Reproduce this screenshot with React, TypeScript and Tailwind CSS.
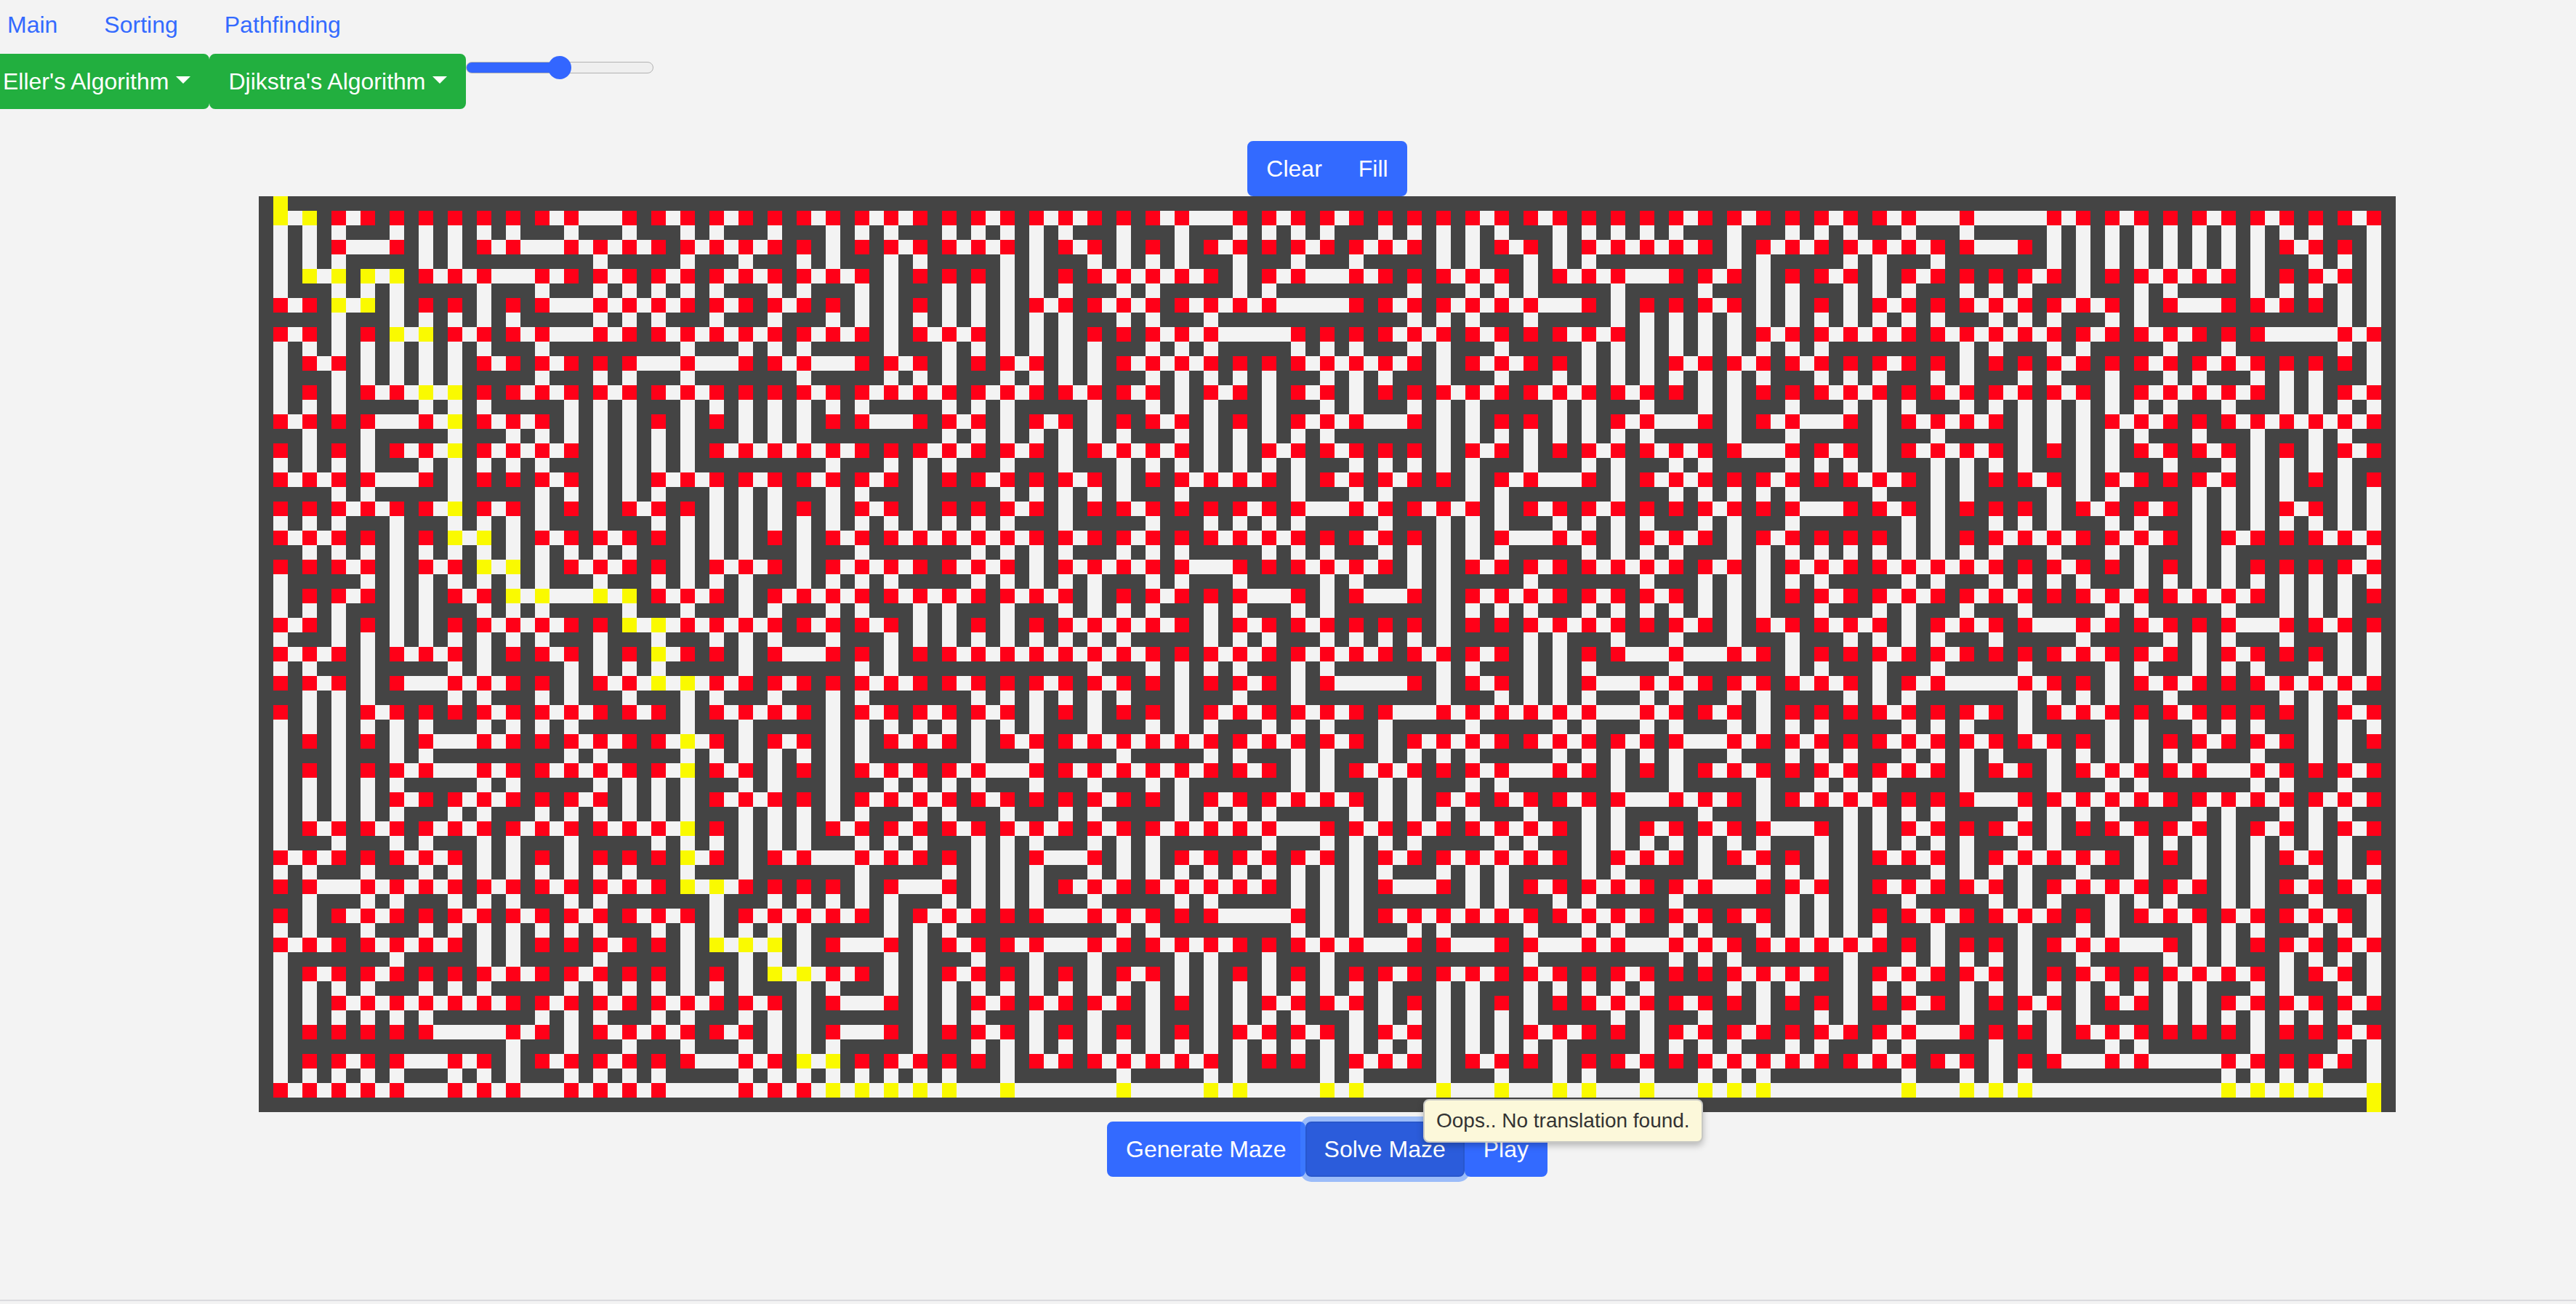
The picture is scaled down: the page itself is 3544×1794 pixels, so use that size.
import React from "react";

const COLS = 73;
const ROWS = 31;
const BLOCK = 15;

// Openings to the left of each cell. Every line is one row of cells, split into
// blocks of fifteen; each hex digit is the index of a cell inside its block.
const LEFT_OPENINGS = [
  "13abce|1467acd|12357ce|469bcde|012479c",
  "3489abcd|01279ad|3689d|123478abce|0a",
  "246789ace|1245e|0125678bc|012359c|1567b",
  "13abcde|13ce|02345679bcde|05be|023679",
  "1579abce|0124589|123459ac|0179abde|013569abc",
  "28ade|013457b|0126789cd|468b|2578",
  "4569ace|04678abd|036bce|029ad|025678c",
  "145689|679c|16789|234789cde|4589abc",
  "5689a|1234589be|0157c|134679cde|57c",
  "1245ae|0246ad|23479de|0347ab|147",
  "3468d|6b|04678abe|1589b|35a",
  "127ac|5789abd|03458de|0347|012458bc",
  "368bc|125679ade|023678ce|123589bcde|2c",
  "379abce|0345789bc|14589cde|139bce|034678",
  "189ade|01246de|0146e|01479ade|123589b",
  "1256ae|349abcde|034678ac|23456bd|2358",
  "25678cde|013679ce|4789c|1234689cde|01569abc",
  "48abd|12368a|34679abcde|01235be|236c",
  "678bce|0378bde|012457abce|024568bce|179",
  "5678abce|1679abde|012489cde|0569bc|0346789c",
  "578b|12678ae|3567bd|0234589ae|02345789bc",
  "24679acde|579bce|1234568acde|3578c|0469c",
  "1256|034567cd|2469bcde|236bc|0123a",
  "234568acd|0178de|12349ae|124568bce|2346ac",
  "3479bde|234589cde|03459abcd|01246cd|01568ab",
  "12456c|12569bcde|1236789bce|012345789a|2345ac",
  "2489b|3459|09bce|2678bce|3678b",
  "345678ace|0256ace|57|124c|148ac",
  "6789cde|156a|469e|0469bcd|34c",
  "3567ac|01247ce|01289c|25678abd|2345678b",
  "123456789abcde|0123456789abcde|0123456789abcde|0123456789abcde|0123456789abc",
];

// Openings below each cell, in the same packing.
const DOWN_OPENINGS = [
  "01245678ace|0245689abce|1345689abce|01235789bd|123456789ac",
  "01256be|13467abde|01357abde|0569ac|12345678abc",
  "023479bcde|0235689abce|0349bcd|14679abde|024589abc",
  "245678bcd|02456789abce|029abd|123456789abce|0134bc",
  "012345679e|123689abcd|0125679ac|012345678de|1257bc",
  "0234569bce|3678abcd|01234678ace|012345689acd|0135689ac",
  "012567abce|01234589ad|0124679abe|024579abde|01234579abc",
  "13689abcde|12389abcde|123456abcde|01257ac|0123468ab",
  "012356789bcde|4678ace|012345789abd|0134789acde|0235789ab",
  "2369abcd|012457abcde|1578bc|134567acd|1236789bc",
  "01246789bde|0123456789ac|023458abce|012457bce|01346789abc",
  "123456789abce|01359abce|0145689abc|012356789abcde|13467c",
  "03456789bde|0134569abcd|013679ad|245678bce|012456789abc",
  "01245789ce|124578acde|02356abcd|01234568abd|03479ab",
  "023456789bd|01246789abcde|2346789ade|13579abce|25679bc",
  "01367abcd|156d|012356abde|0378ac|034678abc",
  "123679ace|02459abcde|135acde|023569ab|012359ab",
  "012345789ae|1456789abd|0124568be|0235678bcd|034678abc",
  "0245abe|0123459be|235689abe|01235789bcde|1234568ab",
  "0123478bcde|1246789bd|015689bc|13689ad|13489b",
  "01234679abcde|1234578acd|1234789abd|01469abc|0123679ab",
  "024578ade|01235679abde|046789cd|012345689abcd|01456789ab",
  "01356789abce|1589abde|012345678abc|0146789cde|024678abc",
  "134678ab|02345689abd|12567bce|03789be|0134578ac",
  "01356789abde|0123678e|05679ad|01346789ac|023678abc",
  "0478be|123679bd|1246d|3459bcde|025679abc",
  "0123567abcde|01346789abcde|012345678abde|0125679abde|012345689bc",
  "0123459abde|123789bd|02345789abcd|124689bd|01256789ab",
  "08ace|123479abcde|0123456789abcde|234578abe|1348bc",
  "01234678abcd|12345678ae|2367ace|02456bde|0789ac",
];

// Junctions on the solved route, keyed by row.
const ROUTE: Record<number, number[]> = {
  0: [0, 1],
  2: [1, 2, 3, 4],
  3: [2, 3],
  4: [4, 5],
  6: [5, 6],
  7: [6],
  8: [6],
  10: [6],
  11: [6, 7],
  12: [7, 8],
  13: [8, 9, 11, 12],
  14: [12, 13],
  15: [13],
  16: [13, 14],
  18: [14],
  19: [14],
  21: [14],
  22: [14],
  23: [14, 15],
  25: [15, 16, 17],
  26: [17, 18],
  29: [18, 19],
};
const LAST_ROW_ROUTE_START = 19;

function unpack(lines: string[]): boolean[][] {
  return lines.map((line) => {
    const row: boolean[] = new Array(COLS).fill(false);
    line.split("|").forEach((block, b) => {
      for (const digit of block) row[b * BLOCK + parseInt(digit, 16)] = true;
    });
    return row;
  });
}

type Tile = "wall" | "open" | "node" | "route";

const FILL: Record<Exclude<Tile, "wall">, string> = {
  open: "fill-[#f3f3f3]",
  node: "fill-[#ff0018]",
  route: "fill-[#fafa00]",
};

function buildTiles(): Tile[][] {
  const left = unpack(LEFT_OPENINGS);
  const down = unpack(DOWN_OPENINGS);
  const tiles: Tile[][] = Array.from({ length: ROWS * 2 + 1 }, () =>
    new Array<Tile>(COLS * 2 + 1).fill("wall"),
  );
  for (let r = 0; r < ROWS; r++) {
    for (let c = 0; c < COLS; c++) {
      const w = left[r][c];
      const e = c + 1 < COLS && left[r][c + 1];
      const n = r === 0 ? c === 0 : down[r - 1][c];
      const s = r === ROWS - 1 ? c === COLS - 1 : down[r][c];
      const straight = (w && e && !n && !s) || (n && s && !w && !e);
      const onRoute = r === ROWS - 1 ? c >= LAST_ROW_ROUTE_START : !!ROUTE[r]?.includes(c);
      tiles[2 * r + 1][2 * c + 1] = straight ? "open" : onRoute ? "route" : "node";
      if (w) tiles[2 * r + 1][2 * c] = "open";
      if (s) tiles[2 * r + 2][2 * c + 1] = "open";
    }
  }
  tiles[0][1] = "route";
  tiles[ROWS * 2][COLS * 2 - 1] = "route";
  return tiles;
}

const TILES = buildTiles();

function Maze() {
  const runs: React.ReactElement[] = [];
  TILES.forEach((row, y) => {
    let x = 0;
    while (x < row.length) {
      const tile = row[x];
      let end = x + 1;
      while (end < row.length && row[end] === tile) end++;
      if (tile !== "wall") {
        runs.push(
          <rect key={`${x}-${y}`} x={x} y={y} width={end - x} height={1} className={FILL[tile]} />,
        );
      }
      x = end;
    }
  });
  return (
    <svg
      viewBox={`0 0 ${COLS * 2 + 1} ${ROWS * 2 + 1}`}
      shapeRendering="crispEdges"
      role="img"
      aria-label="Maze"
      className="block w-full max-w-[2940px] bg-[#444444]"
    >
      {runs}
    </svg>
  );
}

function Button({ className = "", children }: { className?: string; children: React.ReactNode }) {
  return (
    <button
      type="button"
      className={`border-2 px-6 py-3 text-white whitespace-nowrap ${className}`}
    >
      {children}
    </button>
  );
}

const BLUE = "border-[#336aff] bg-[#336aff]";
const GREEN = "border-[#22af3f] bg-[#22af3f]";

function Caret() {
  return (
    <span
      aria-hidden="true"
      className="ml-2.5 inline-block border-x-10 border-t-10 border-x-transparent border-t-white align-[8px]"
    />
  );
}

export default function App() {
  return (
    <div className="flex min-h-screen flex-col overflow-x-hidden bg-[#f3f3f3] font-['Liberation_Sans',Arial,sans-serif] text-[32px] leading-[48px]">
      <header className="-ml-[22px]">
        <nav className="flex pt-[10px] pb-4 text-[#336aff]">
          <a href="#main" className="px-8">Main</a>
          <a href="#sorting" className="px-8">Sorting</a>
          <a href="#pathfinding" className="px-8">Pathfinding</a>
        </nav>
        <div className="flex items-start">
          <Button className={`rounded-lg ${GREEN}`}>
            Eller's Algorithm
            <Caret />
          </Button>
          <Button className={`rounded-lg ${GREEN}`}>
            Djikstra's Algorithm
            <Caret />
          </Button>
          <input
            type="range"
            aria-label="Speed"
            min={0}
            max={100}
            defaultValue={50}
            className="mt-[3px] h-8 w-[258px] appearance-none bg-transparent [&::-webkit-slider-runnable-track]:h-4 [&::-webkit-slider-runnable-track]:rounded-full [&::-webkit-slider-runnable-track]:border [&::-webkit-slider-runnable-track]:border-[#b2b2b2] [&::-webkit-slider-runnable-track]:bg-[linear-gradient(to_right,#3366ff_50%,#efefef_50%)] [&::-webkit-slider-thumb]:-mt-[9px] [&::-webkit-slider-thumb]:size-8 [&::-webkit-slider-thumb]:appearance-none [&::-webkit-slider-thumb]:rounded-full [&::-webkit-slider-thumb]:bg-[#3366ff]"
          />
        </div>
      </header>

      <main className="flex flex-col items-center pt-11 pl-[108px]">
        <div className="flex">
          <Button className={`rounded-l-lg ${BLUE}`}>Clear</Button>
          <Button className={`-ml-0.5 rounded-r-lg ${BLUE}`}>Fill</Button>
        </div>
        <Maze />
        <div className="relative mt-[13px] flex">
          <Button className={`rounded-lg ${BLUE}`}>Generate Maze</Button>
          <Button className="rounded-lg border-[#2857cd] bg-[#2b5cdb] shadow-[0_0_0_7px_rgba(68,134,255,0.5)]">
            Solve Maze
          </Button>
          <Button className={`relative rounded-lg ${BLUE}`}>Play</Button>
          <div
            role="tooltip"
            className="absolute -top-[31px] left-[435px] z-10 rounded-lg border-2 border-[#c8c8c4] bg-[#fcf8da] px-4 py-2 text-[28px] leading-10 whitespace-nowrap text-[#333333] shadow-[0_4px_10px_rgba(0,0,0,0.25)]"
          >
            Oops.. No translation found.
          </div>
        </div>
      </main>

      <hr className="mt-auto mb-1 w-full border-t-2 border-[#dadade]" />
    </div>
  );
}
